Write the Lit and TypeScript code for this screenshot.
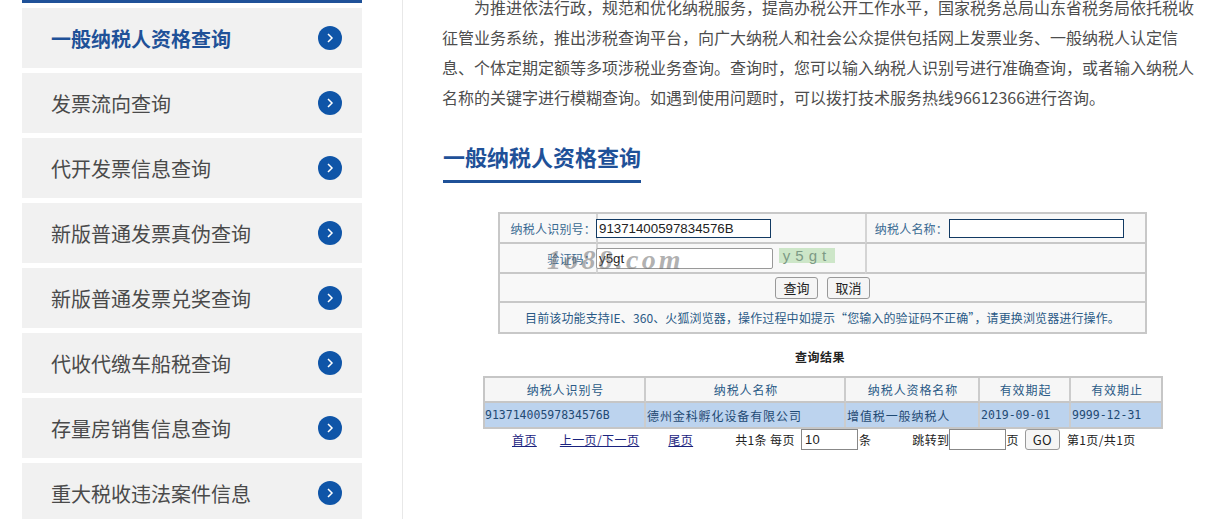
import { LitElement, html, css } from "lit";
import { customElement } from "lit/decorators.js";

const items = ["一般纳税人资格查询","发票流向查询","代开发票信息查询","新版普通发票真伪查询","新版普通发票兑奖查询","代收代缴车船税查询","存量房销售信息查询","重大税收违法案件信息"];

@customElement("app-root")
export class AppRoot extends LitElement {
  static styles = css`
    :host { display:block; width:1226px; height:519px; overflow:hidden; background:#fff; font-family:"Noto Sans CJK SC","Liberation Sans",sans-serif; color:#333; }
    .page { display:flex; height:519px; padding-left:22px; box-sizing:border-box; }
    .side { width:340px; flex:none; border-top:3px solid #1f5198; display:flex; flex-direction:column; gap:5px; padding-top:5px; height:600px; box-sizing:border-box; }
    .item { height:60px; flex:none; background:#f1f1f1; display:flex; align-items:center; justify-content:space-between; padding:0 20px 0 29px; font-size:20px; color:#4a4a4a; }
    .item.on { color:#1f5198; font-weight:700; }
    .item svg { width:24px; height:24px; display:block; }
    .main { margin-left:40px; border-left:1px solid #e8e8e8; padding-left:40px; width:800px; flex:none; box-sizing:border-box; position:relative; }
    .intro { margin:-8px 0 0 -1px; font-size:16px; line-height:30px; color:#4d4d4d; text-indent:32px; width:756px; }
    .title { display:inline-block; margin:27px 0 0; padding-bottom:6px; border-bottom:3px solid #1f5198; font-size:22px; line-height:35px; font-weight:700; color:#1f5198; width:198px; white-space:nowrap; }
    .form { margin:29px 0 0 55px; width:649px; box-sizing:border-box; border:2px solid #c8c8c8; background:#f8f8f8; display:grid; grid-template-columns:96px 269px 83px 1fr; grid-template-rows:30px 30px 29px 29px; font-size:12px; color:#2a5a86; }
    .form > div { display:flex; align-items:center; box-sizing:border-box; border-bottom:2px solid #c8c8c8; }
    .form > div.val { border-left:2px solid #d4d4d4; }
    .form > div.lab3 { border-left:2px solid #d4d4d4; }
    .form > div.last { border-bottom:none; }
    .lab { justify-content:flex-end; letter-spacing:.2px; color:#3a6a92; white-space:nowrap; }
    .span { grid-column:1 / -1; justify-content:center; }
    .span2 { grid-column:3 / -1; }
    .inp { box-sizing:border-box; border:1px solid #123a63; background:#fff; width:175px; height:19px; font:13.3px "Liberation Sans",sans-serif; color:#222; padding:0 2px; display:flex; align-items:center; margin-left:1px; }
    .val .inp { margin-left:-2px; }
    .inp.g { border:1px solid #999; border-radius:2px; height:21px; width:177px; }
    .captcha { margin-left:6px; width:56px; height:15px; background:#cde6c8; color:#7d9a85; font:15px/15px "Liberation Sans",sans-serif; letter-spacing:5px; text-align:center; margin-top:-6px; }
    .btn { box-sizing:border-box; width:43px; height:22px; border:1px solid #999; border-radius:3px; background:#f5f5f5; color:#222; font-size:13px; display:inline-flex; align-items:center; justify-content:center; }
    .btns { gap:9px; }
    .note { letter-spacing:.12px; }
    .wm { position:absolute; left:144px; top:244px; font:italic 700 28px "Liberation Serif",serif; color:rgba(110,110,110,.55); letter-spacing:3.2px; }
    .rtitle { margin:14px 0 0 352px; font-size:12px; line-height:18px; font-weight:700; color:#222; letter-spacing:.5px; }
    .res { margin:10px 0 0 40px; width:680px; box-sizing:border-box; border:2px solid #c6c6c6; display:grid; grid-template-columns:161px 200px 134px 91px 1fr; grid-template-rows:25px 24px; font-size:12px; color:#2a5a86; background:#f6f6f6; }
    .res div { display:flex; align-items:center; box-sizing:border-box; border-right:2px solid #ccc; letter-spacing:.9px; }
    .res .h { justify-content:center; border-bottom:2px solid #c6c6c6; padding-left:2px; }
    .res .d { background:#bcd3ee; padding-left:1px; color:#1f4a74; white-space:nowrap; }
    .res .m { font-family:"DejaVu Sans Mono","Liberation Mono",monospace; font-size:11.5px; letter-spacing:0; }
    .res .m.first { padding-left:0; }
    .res div:nth-child(5n) { border-right:none; }
    .pager { margin:-2px 0 0 40px; height:24px; font-size:12px; color:#222; display:flex; align-items:center; white-space:nowrap; width:679px; letter-spacing:.4px; }
    .pager a { color:#1a237e; text-decoration:underline; }
    .pi { box-sizing:border-box; border:1px solid #888; background:#fff; width:57px; height:21px; font:13px "Liberation Sans",sans-serif; padding:0 3px; display:flex; align-items:center; }
    .pager .btn { width:35px; height:21px; margin-left:6px; }
    .g-first { margin-left:29px; } .g-prev { margin-left:23px; } .g-last { margin-left:29px; } .g-total { margin-left:42px; }
    .g-size { margin-left:6px; } .g1 { margin-left:1px; } .g-jump { margin-left:41px; } .g-to { margin-left:-1px; } .g-page { margin-left:7px; }
  `;
  render() {
    return html`<div class="page">
      <nav class="side">${items.map((t,i)=>html`<div class="item ${i===0?"on":""}"><span>${t}</span>
        <svg viewBox="0 0 24 24"><circle cx="12" cy="12" r="12" fill="#0f55a8"/><path d="M10 8l4 4-4 4" fill="none" stroke="#fff" stroke-width="1.5"/></svg></div>`)}</nav>
      <main class="main">
        <p class="intro">为推进依法行政，规范和优化纳税服务，提高办税公开工作水平，国家税务总局山东省税务局依托税收征管业务系统，推出涉税查询平台，向广大纳税人和社会公众提供包括网上发票业务、一般纳税人认定信息、个体定期定额等多项涉税业务查询。查询时，您可以输入纳税人识别号进行准确查询，或者输入纳税人名称的关键字进行模糊查询。如遇到使用问题时，可以拨打技术服务热线96612366进行咨询。</p>
        <h2 class="title">一般纳税人资格查询</h2>
        <div class="form">
          <div class="lab">纳税人识别号：</div>
          <div class="val"><span class="inp">91371400597834576B</span></div>
          <div class="lab lab3">纳税人名称：</div>
          <div><span class="inp">&nbsp;</span></div>
          <div class="lab">验证码：</div>
          <div class="val"><span class="inp g">y5gt</span><span class="captcha">y5gt</span></div>
          <div class="span2 lab3"></div>
          <div class="span btns"><span class="btn">查询</span><span class="btn">取消</span></div>
          <div class="span last note">目前该功能支持IE、360、火狐浏览器，操作过程中如提示“您输入的验证码不正确”，请更换浏览器进行操作。</div>
        </div>
        <div class="wm">1o88.com</div>
        <div class="rtitle">查询结果</div>
        <div class="res">
          <div class="h">纳税人识别号</div><div class="h">纳税人名称</div><div class="h">纳税人资格名称</div><div class="h">有效期起</div><div class="h">有效期止</div>
          <div class="d m first">91371400597834576B</div><div class="d">德州金科孵化设备有限公司</div><div class="d">增值税一般纳税人</div><div class="d m">2019-09-01</div><div class="d m">9999-12-31</div>
        </div>
        <div class="pager">
          <a class="g-first">首页</a>
          <a class="g-prev">上一页/下一页</a>
          <a class="g-last">尾页</a>
          <span class="g-total">共1条 每页</span>
          <span class="pi g-size">10</span><span class="g1">条</span>
          <span class="g-jump">跳转到</span><span class="pi g-to"></span><span class="g1">页</span>
          <span class="btn">GO</span>
          <span class="g-page">第1页/共1页</span>
        </div>
      </main>
    </div>`;
  }
}
